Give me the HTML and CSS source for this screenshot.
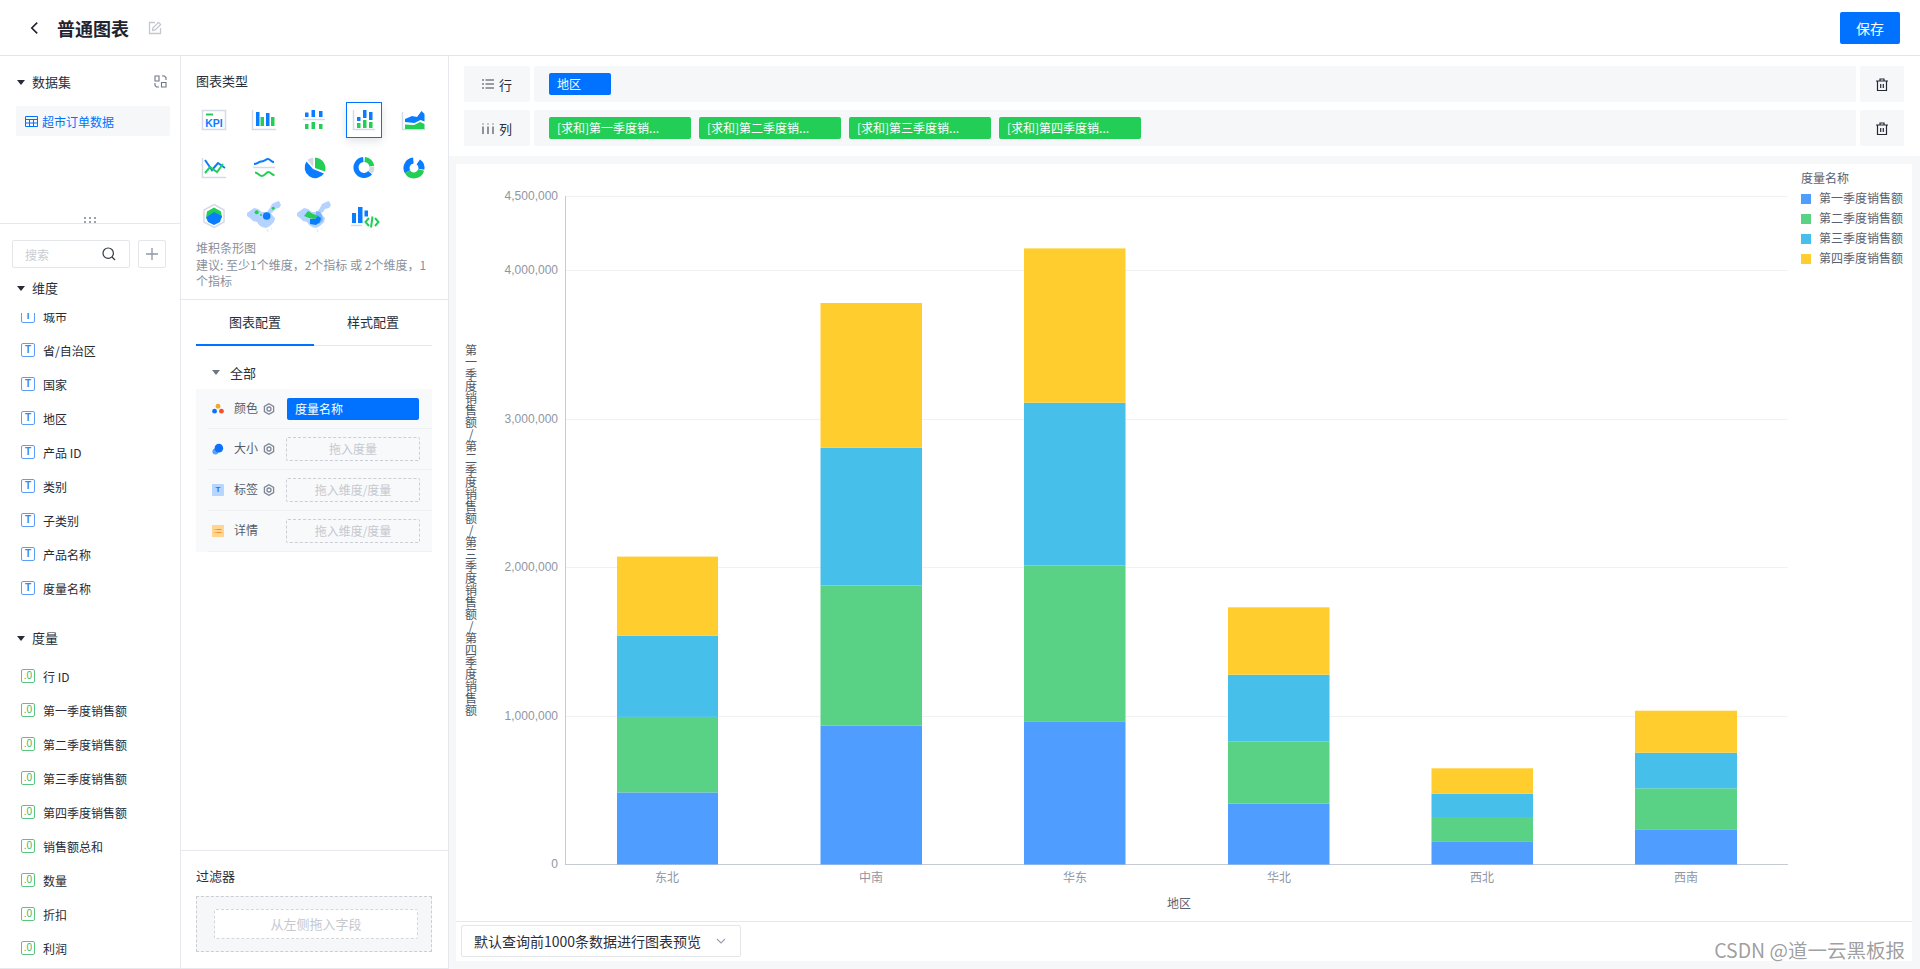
FILE: index.html
```html
<!DOCTYPE html>
<html lang="zh-CN">
<head>
<meta charset="utf-8">
<title>普通图表</title>
<link rel="stylesheet" href="styles.css">
</head>
<body>
<div class="app">
  <header class="topbar">
    <div class="topbar-left">
      <svg class="back" viewBox="0 0 10 14"><path d="M8 1 2 7l6 6"/></svg>
      <h1 class="title">普通图表</h1>
      <svg class="edit" viewBox="0 0 14 14"><path d="M7 1.500H1.500v11h11V7"/><path d="M4.500 9.500 5 6.800 10.500 1.300 12.700 3.500 7.200 9z"/></svg>
    </div>
    <button class="save">保存</button>
  </header>

  <main class="main">
    <aside class="col-fields">
      <section class="dataset">
        <div class="sec-head">
          <span class="caret"></span><span class="sec-name">数据集</span>
          <svg class="swap" viewBox="0 0 13 13"><path d="M5 1H1v5h4V1zM8 1h2.500L12 2.500V5M1 8v2.500L2.500 12H5"/><path d="M7.500 7.500h4.500v4.500H7.500z"/></svg>
        </div>
        <div class="dataset-item">
          <svg class="tbl" viewBox="0 0 13 11"><path d="M.5.500h12v10H.5zM.5 3.500h12M.5 7h12M4.500 3.500v7M8.500 3.500v7"/></svg>
          <span>超市订单数据</span>
        </div>
        <div class="drag-dots">
          <i></i><i></i><i></i><i></i><i></i><i></i>
        </div>
      </section>

      <div class="search-row">
        <div class="search">
          <span>搜索</span>
          <svg viewBox="0 0 14 14"><circle cx="6.200" cy="6.200" r="5.200"/><path d="m10 10 3 3"/></svg>
        </div>
        <div class="plus"><svg viewBox="0 0 12 12"><path d="M6 0v12M0 6h12"/></svg></div>
      </div>
      <div class="sec-head dim-head"><span class="caret"></span><span class="sec-name">维度</span></div>

      <div class="field-scroll">
        <div class="field-inner">
          <div class="field"><span class="ftype t">T</span>城市</div>
          <div class="field"><span class="ftype t">T</span>省/自治区</div>
          <div class="field"><span class="ftype t">T</span>国家</div>
          <div class="field"><span class="ftype t">T</span>地区</div>
          <div class="field"><span class="ftype t">T</span>产品 ID</div>
          <div class="field"><span class="ftype t">T</span>类别</div>
          <div class="field"><span class="ftype t">T</span>子类别</div>
          <div class="field"><span class="ftype t">T</span>产品名称</div>
          <div class="field"><span class="ftype t">T</span>度量名称</div>
          <div class="sec-head measure-head"><span class="caret"></span><span class="sec-name">度量</span></div>
          <div class="field"><span class="ftype n">.0</span>行 ID</div>
          <div class="field"><span class="ftype n">.0</span>第一季度销售额</div>
          <div class="field"><span class="ftype n">.0</span>第二季度销售额</div>
          <div class="field"><span class="ftype n">.0</span>第三季度销售额</div>
          <div class="field"><span class="ftype n">.0</span>第四季度销售额</div>
          <div class="field"><span class="ftype n">.0</span>销售额总和</div>
          <div class="field"><span class="ftype n">.0</span>数量</div>
          <div class="field"><span class="ftype n">.0</span>折扣</div>
          <div class="field"><span class="ftype n">.0</span>利润</div>
        </div>
      </div>
    </aside>

    <aside class="col-config">
      <section class="types">
        <div class="block-title">图表类型</div>
        <div class="type-grid">
          <div class="type-cell"><svg viewBox="0 0 36 36"><path class="ln" d="M6.500 8.500h23v19h-23z"/><path class="g" d="M10 11.500h7v2h-7z"/><text class="kpi" x="18" y="24.500">KPI</text></svg></div>
          <div class="type-cell"><svg viewBox="0 0 36 36"><path class="ln" d="M6.500 8v19.500H30"/><path class="b" d="M10 10h3.500v14H10zM20 11h3.500v13H20z"/><path class="g" d="M14.500 15H18v9h-3.500zM25 15h3.500v9H25z"/></svg></div>
          <div class="type-cell"><svg viewBox="0 0 36 36"><path class="ln" d="M7 17.500h22"/><path class="b" d="M9 10.500h3.500V15H9zM15.500 8H19v7h-3.500zM23 9h3.500v6H23z"/><path class="g" d="M9 22h3.500v5H9zM15.500 20H19v7h-3.500zM23 22h3.500v5H23z"/></svg></div>
          <div class="type-cell active"><svg viewBox="0 0 36 36"><path class="ln" d="M7.500 8v19.500H29"/><path class="b" d="M11 15h3.500v4H11zM17 8h3.500v8H17zM23 10h3.500v8H23z"/><path class="g" d="M11 21h3.500v5H11zM17 18h3.500v8H17zM23 20h3.500v6H23z"/></svg></div>
          <div class="type-cell"><svg viewBox="0 0 36 36"><path class="ln" d="M6.500 10v17.500H29"/><path class="b" d="M9 17l7-3 5 1 4.500-6 3 3v7.500l-4-1.500-6 3-9.500-1z"/><path class="g" d="M9 22.500l9 .5 6-3 4.500 2V27H9z"/></svg></div>

          <div class="type-cell"><svg viewBox="0 0 36 36"><path class="ln" d="M6.500 8v19.500H30"/><path class="st-b" d="M9 10l7 10 6-7 7 5"/><path class="st-g" d="M9 23l5-6 7 5 6-8"/></svg></div>
          <div class="type-cell"><svg viewBox="0 0 36 36"><path class="ln" d="M7 17.500h22"/><path class="st-b" d="M8 14c3 0 4-2 7-2.500 3 0 5-2.500 7-2.500 2.500 0 3 3 6 3"/><path class="st-g" d="M9 22.500c3 0 4 3.500 7 3.500s4-4 6.500-4 3 3 6 3"/></svg></div>
          <div class="type-cell"><svg viewBox="0 0 36 36"><path class="b" d="M10.500 11.500A10.500 10.500 0 1 0 28 23.500L17 19z"/><path class="g" d="M19 7.500A11 11 0 0 1 29 21.500L19 18z"/><path class="l" d="M17.300 7.500A10 10 0 0 0 11.500 10L17.300 17z"/></svg></div>
          <div class="type-cell"><svg viewBox="0 0 36 36"><path class="ar-b" d="M24.100 22.600A8 8 0 1 1 17.300 9.500"/><path class="ar-g" d="M18.700 9.500A8 8 0 0 1 25.900 16.100"/><path class="ar-l" d="M26 16.800A8 8 0 0 1 24.550 22.100"/></svg></div>
          <div class="type-cell"><svg viewBox="0 0 36 36"><path class="sb-b" d="M11.500 21.750A7.500 7.500 0 0 1 17.350 10.500"/><path class="sb-b" d="M22.300 11.850A7.500 7.500 0 0 1 25.400 19.300"/><path class="sb-g" d="M25.200 19.900A7.500 7.500 0 0 1 11.500 21.750"/></svg></div>

          <div class="type-cell"><svg viewBox="0 0 36 36"><path class="ln" d="M18 6.500 28 12v12l-10 5.500L8 24V12z"/><path class="g" d="M18 9.500 25 13.500 26 20 18 22 10 20 11 13.500z"/><path class="b" d="M10 19.500 18 14l8 4-2 6-6 3-6-3z"/></svg></div>
          <div class="type-cell"><svg viewBox="0 0 36 36"><path class="m" d="M1 15l7-5 4 1 4 3 5 0 3-4 2-4 4-2 3-1 2 4-2 3-4 1-2 3-2 1 2 3 2 2-1 4-4 4-4 2-4-1-3-2-2-3-4-1-3-3-3-2z"/><path class="m2" d="M21 31l1 3M25 31h1"/><circle class="g" cx="10.700" cy="14.300" r="2"/><circle class="g" cx="27.300" cy="10.300" r="1.500"/><circle class="g" cx="15" cy="17" r="1"/><circle class="b" cx="20.700" cy="18" r="3.800"/></svg></div>
          <div class="type-cell"><svg viewBox="0 0 36 36"><path class="m" d="M1 15l7-5 4 1 4 3 5 0 3-4 2-4 4-2 3-1 2 4-2 3-4 1-2 3-2 1 2 3 2 2-1 4-4 4-4 2-4-1-3-2-2-3-4-1-3-3-3-2z"/><path class="m2" d="M21 31l1 3M25 31h1"/><path class="md" d="M20 13l4 1 2 3 1 5-4 4-6-1 3-8z"/><path class="g" d="M8 18l4-5 5 3 6 2-5 3-5-1z"/><path class="b" d="M14 21l5 0 3-3 3 2-1 4-4 3-6-1z"/></svg></div>
          <div class="type-cell"><svg viewBox="0 0 36 36"><path class="ln" d="M5 27.500h11"/><path class="b" d="M6 15h4v10H6zM12 9h4.500v16H12zM18.500 12.500H22v6h-3.500z"/><path class="st-g" d="M23 20l-3.500 4 3.500 4M26.500 18.500l-1.500 11M29 20l3.500 4-3.500 4"/></svg></div>
        </div>
        <p class="type-desc">堆积条形图<br>建议: 至少1个维度，2个指标 或 2个维度，1个指标</p>
      </section>

      <div class="tabs">
        <div class="tab on">图表配置</div>
        <div class="tab">样式配置</div>
      </div>

      <div class="group-head"><span class="caret gray"></span><span>全部</span></div>
      <div class="mark-panel">
        <div class="mark-row">
          <svg class="mk" viewBox="0 0 14 14"><circle cx="7" cy="3.800" r="2.800" fill="#f5a623"/><circle cx="3" cy="9.500" r="2.800" fill="#0a72ff"/><circle cx="11" cy="9.500" r="2.800" fill="#f0532d"/></svg>
          <span class="mk-name">颜色</span>
          <svg class="gear" viewBox="0 0 12 12"><path d="M6 .7l4.600 2.650v5.300L6 11.300 1.400 8.650v-5.300z"/><circle cx="6" cy="6" r="2"/></svg>
          <div class="mk-tag">度量名称</div>
        </div>
        <div class="mark-row">
          <svg class="mk" viewBox="0 0 14 14"><circle cx="4" cy="10" r="3.500" fill="#5c9dff"/><circle cx="8" cy="6" r="5" fill="#0a72ff"/></svg>
          <span class="mk-name">大小</span>
          <svg class="gear" viewBox="0 0 12 12"><path d="M6 .7l4.600 2.650v5.300L6 11.300 1.400 8.650v-5.300z"/><circle cx="6" cy="6" r="2"/></svg>
          <div class="mk-drop">拖入度量</div>
        </div>
        <div class="mark-row">
          <span class="mk-t">T</span>
          <span class="mk-name">标签</span>
          <svg class="gear" viewBox="0 0 12 12"><path d="M6 .7l4.600 2.650v5.300L6 11.300 1.400 8.650v-5.300z"/><circle cx="6" cy="6" r="2"/></svg>
          <div class="mk-drop">拖入维度/度量</div>
        </div>
        <div class="mark-row">
          <svg class="mk" viewBox="0 0 12 12"><path fill="#ffd591" d="M0 0h12v12H0z"/><path fill="#f5921e" d="M2.500 4h1v1h-1zM4.500 4h5v1h-5zM2.500 7h1v1h-1zM4.500 7h5v1h-5z"/></svg>
          <span class="mk-name">详情</span>
          <span class="gear-space"></span>
          <div class="mk-drop">拖入维度/度量</div>
        </div>
      </div>

      <section class="filter">
        <div class="block-title">过滤器</div>
        <div class="filter-box"><div class="filter-drop">从左侧拖入字段</div></div>
      </section>
    </aside>

    <section class="col-chart">
      <div class="shelves">
        <div class="shelf">
          <div class="shelf-label">
            <svg viewBox="0 0 12 10"><path d="M0 1h2M3.500 1H12M0 5h2M3.500 5H12M0 9h2M3.500 9H12"/></svg>
            <span>行</span>
          </div>
          <div class="shelf-body"><span class="pill dim">地区</span></div>
          <div class="shelf-del"><svg viewBox="0 0 12 13"><path d="M0 3h12M4 3V1h4v2M1.500 3v9.500h9V3M4.700 6v4M7.300 6v4"/></svg></div>
        </div>
        <div class="shelf">
          <div class="shelf-label">
            <svg viewBox="0 0 12 12"><path d="M1 1.500v1M1 4.500V12M6 1.500v1M6 4.500V12M11 1.500v1M11 4.500V12"/></svg>
            <span>列</span>
          </div>
          <div class="shelf-body">
            <span class="pill mea">[求和]第一季度销...</span>
            <span class="pill mea">[求和]第二季度销...</span>
            <span class="pill mea">[求和]第三季度销...</span>
            <span class="pill mea">[求和]第四季度销...</span>
          </div>
          <div class="shelf-del"><svg viewBox="0 0 12 13"><path d="M0 3h12M4 3V1h4v2M1.500 3v9.500h9V3M4.700 6v4M7.300 6v4"/></svg></div>
        </div>
      </div>

      <div class="chart-wrap">
        <div class="chart-card">
          <svg class="chart" viewBox="456 164 1456 757">
            <path class="grid" d="M565 196.500H1788M565 270.500H1788M565 419.500H1788M565 567.500H1788M565 716.500H1788"/>
            <path class="axis" d="M565.500 196V865M565 864.500H1788"/>

            <text class="ylab" x="558" y="200">4,500,000</text>
            <text class="ylab" x="558" y="274">4,000,000</text>
            <text class="ylab" x="558" y="423">3,000,000</text>
            <text class="ylab" x="558" y="571">2,000,000</text>
            <text class="ylab" x="558" y="720">1,000,000</text>
            <text class="ylab" x="558" y="868">0</text>
            <text class="ytitle" x="471" y="344">第一季度销售额/第二季度销售额/第三季度销售额/第四季度销售额</text>

            <rect class="s1" x="617" y="792.400" width="101" height="72"/>
            <rect class="s2" x="617" y="716.900" width="101" height="75.500"/>
            <rect class="s3" x="617" y="635.700" width="101" height="81.200"/>
            <rect class="s4" x="617" y="556.600" width="101" height="79.100"/>

            <rect class="s1" x="820.500" y="725.700" width="101.500" height="138.800"/>
            <rect class="s2" x="820.500" y="585.500" width="101.500" height="140.200"/>
            <rect class="s3" x="820.500" y="447.700" width="101.500" height="137.800"/>
            <rect class="s4" x="820.500" y="303" width="101.500" height="144.700"/>

            <rect class="s1" x="1024" y="721.300" width="101.500" height="143.200"/>
            <rect class="s2" x="1024" y="565.400" width="101.500" height="155.900"/>
            <rect class="s3" x="1024" y="402.700" width="101.500" height="162.700"/>
            <rect class="s4" x="1024" y="248.400" width="101.500" height="154.300"/>

            <rect class="s1" x="1228" y="803.700" width="101.500" height="60.800"/>
            <rect class="s2" x="1228" y="741.300" width="101.500" height="62.400"/>
            <rect class="s3" x="1228" y="674.700" width="101.500" height="66.600"/>
            <rect class="s4" x="1228" y="607.300" width="101.500" height="67.400"/>

            <rect class="s1" x="1431.500" y="841.300" width="101.500" height="23.200"/>
            <rect class="s2" x="1431.500" y="817" width="101.500" height="24.300"/>
            <rect class="s3" x="1431.500" y="793.700" width="101.500" height="23.300"/>
            <rect class="s4" x="1431.500" y="768.300" width="101.500" height="25.400"/>

            <rect class="s1" x="1635" y="829.300" width="102" height="35.200"/>
            <rect class="s2" x="1635" y="788.300" width="102" height="41"/>
            <rect class="s3" x="1635" y="752.700" width="102" height="35.600"/>
            <rect class="s4" x="1635" y="710.700" width="102" height="42"/>

            <text class="xlab" x="667" y="882">东北</text>
            <text class="xlab" x="871" y="882">中南</text>
            <text class="xlab" x="1075" y="882">华东</text>
            <text class="xlab" x="1279" y="882">华北</text>
            <text class="xlab" x="1482" y="882">西北</text>
            <text class="xlab" x="1686" y="882">西南</text>
            <text class="xtitle" x="1179" y="908">地区</text>

            <text class="lgd" x="1801" y="183">度量名称</text>
            <rect class="s1" x="1801" y="194" width="10" height="10"/><text class="lgd" x="1819" y="203">第一季度销售额</text>
            <rect class="s2" x="1801" y="214" width="10" height="10"/><text class="lgd" x="1819" y="223">第二季度销售额</text>
            <rect class="s3" x="1801" y="234" width="10" height="10"/><text class="lgd" x="1819" y="243">第三季度销售额</text>
            <rect class="s4" x="1801" y="254" width="10" height="10"/><text class="lgd" x="1819" y="263">第四季度销售额</text>
          </svg>
          <footer class="chart-foot">
            <div class="limit-select">
              <span>默认查询前1000条数据进行图表预览</span>
              <svg viewBox="0 0 10 6"><path d="M1 1l4 4 4-4"/></svg>
            </div>
          </footer>
        </div>
      </div>
    </section>
  </main>
  <div class="watermark">CSDN @道一云黑板报</div>
</div>
</body>
</html>
```

FILE: styles.css
```css
* { box-sizing: border-box; }
html, body { margin: 0; height: 100%; }
body {
  font-family: "Noto Sans CJK SC", "Noto Sans", "Liberation Sans", sans-serif;
  font-size: 12px;
  color: #2a2f3a;
  background: #fff;
  overflow: hidden;
}
.app { position: relative; height: 969px; display: flex; flex-direction: column; }

/* top bar */
.topbar {
  height: 56px; flex: none;
  display: flex; align-items: center; justify-content: space-between;
  padding: 0 20px 0 30px;
  border-bottom: 1px solid #e4e5e7;
}
.topbar-left { display: flex; align-items: center; }
.back { width: 9px; height: 14px; fill: none; stroke: #1f232b; stroke-width: 1.800; }
.title { margin: 0 0 0 18px; font-size: 18px; line-height: 24px; font-weight: 700; color: #1f2430; }
.edit { width: 14px; height: 14px; margin-left: 19px; fill: none; stroke: #c4c8d0; stroke-width: 1.300; }
.save {
  width: 60px; height: 32px; border: 0; border-radius: 2px;
  background: #0072ff; color: #fff;
  font: 14px "Noto Sans CJK SC", sans-serif;
  margin-top: 1px;
}

.main { flex: 1; display: flex; min-height: 0; }

/* left column */
.col-fields {
  width: 181px; flex: none;
  display: flex; flex-direction: column;
  border-right: 1px solid #e6e8ee;
  border-bottom: 1px solid #e6e8ee;
}
.dataset { position: relative; height: 168px; flex: none; padding-top: 16px; border-bottom: 1px solid #e6e8ee; }
.sec-head { display: flex; align-items: center; height: 20px; padding-left: 17px; position: relative; }
.caret {
  width: 0; height: 0; flex: none;
  border-left: 4px solid transparent; border-right: 4px solid transparent;
  border-top: 5px solid #262b36;
}
.caret.gray { border-top-color: #6f7682; }
.sec-name { margin-left: 7px; font-size: 13px; line-height: 20px; color: #2a2f3a; }
.swap {
  position: absolute; left: 154px; top: 3px;
  width: 13px; height: 13px; fill: none; stroke: #6f7888; stroke-width: 1.100;
}
.dataset-item {
  margin: 14px 10px 0 16px; height: 30px; border-radius: 2px;
  background: #f6f7f9; color: #0072ff;
  display: flex; align-items: center; padding-left: 9px;
}
.tbl { width: 13px; height: 11px; margin-right: 4px; fill: none; stroke: #0072ff; stroke-width: 1; }
.drag-dots {
  position: absolute; left: 84px; top: 161px; width: 12px;
  display: grid; grid-template-columns: repeat(3, 2px); gap: 2px 3px;
}
.drag-dots i { width: 2px; height: 2px; background: #9aa1ad; }

.search-row { display: flex; gap: 8px; padding: 16px 0 0 12px; flex: none; }
.search {
  width: 118px; height: 28px; border: 1px solid #e4e6ea; border-radius: 2px;
  display: flex; align-items: center; justify-content: space-between;
  padding: 0 13px 0 12px; color: #c9ccd2;
}
.search svg { width: 14px; height: 14px; fill: none; stroke: #333a46; stroke-width: 1.200; }
.plus {
  width: 28px; height: 28px; border: 1px solid #e4e6ea; border-radius: 2px;
  display: flex; align-items: center; justify-content: center;
}
.plus svg { width: 12px; height: 12px; fill: none; stroke: #8e96a4; stroke-width: 1.300; }
.dim-head { margin-top: 10px; margin-bottom: 1px; flex: none; }

.field-scroll { margin-top: 14px; flex: 1; min-height: 0; overflow: hidden; }
.field-inner { margin-top: -14px; }
.field {
  height: 34px; display: flex; align-items: center;
  padding-left: 21px; font-size: 12px; color: #262b36;
}
.ftype {
  width: 14px; height: 14px; flex: none; margin-right: 8px;
  border-radius: 2px; border: 1px solid;
  display: flex; align-items: center; justify-content: center;
  font: 10px/12px "Liberation Sans", sans-serif;
}
.ftype.t { border-color: #5b9df8; color: #3f86ee; font-weight: 700; }
.ftype.n { border-color: #5bc57f; color: #3db768; }
.measure-head { margin: 16px 0 4px; height: 34px; }

/* middle column */
.col-config {
  width: 268px; flex: none; position: relative;
  display: flex; flex-direction: column;
  border-right: 1px solid #e6e8ee;
  border-bottom: 1px solid #e6e8ee;
}
.types { height: 244px; flex: none; padding: 15px 12px 0 15px; border-bottom: 1px solid #e6e8ee; }
.block-title { font-size: 13px; line-height: 20px; color: #2a2f3a; }
.type-grid {
  margin-top: 11px;
  display: grid; grid-template-columns: repeat(5, 36px); grid-auto-rows: 36px; gap: 12px 14px;
}
.type-cell { width: 36px; height: 36px; }
.type-cell svg { display: block; width: 36px; height: 36px; overflow: visible; }
.type-cell.active { border: 1px solid #0072ff; box-shadow: 0 3px 8px rgba(30, 50, 90, .14); }
.type-cell.active svg { margin: -1px; }
.ln { fill: none; stroke: #d5dbe6; stroke-width: 1.500; }
.b { fill: #0a7cff; }
.g { fill: #22ce55; }
.l { fill: #d3d8e2; }
.m { fill: #b4d3ff; }
.md { fill: #7db2ff; }
.m2 { fill: none; stroke: #e6edf8; stroke-width: 1.500; }
.st-b { fill: none; stroke: #0a7cff; stroke-width: 2; }
.st-g { fill: none; stroke: #22ce55; stroke-width: 2; }
.ar-b, .ar-g, .ar-l { fill: none; stroke-width: 5; }
.ar-b { stroke: #0a7cff; }
.ar-g { stroke: #22ce55; }
.ar-l { stroke: #d3d8e2; }
.sb-b, .sb-g { fill: none; stroke-width: 6; }
.sb-b { stroke: #0a7cff; }
.sb-g { stroke: #22ce55; }
.kpi { font: 700 10.500px "Liberation Sans", sans-serif; fill: #0a7cff; text-anchor: middle; }
.type-desc { margin: 6px 0 0; font-size: 12px; line-height: 16.500px; color: #8a909c; }

.tabs { display: flex; height: 46px; margin: 0 16px 0 15px; flex: none; border-bottom: 1px solid #e6e8ee; }
.tab { width: 118px; height: 46px; font-size: 13px; line-height: 44px; text-align: center; color: #2a2f3a; }
.tab.on { border-bottom: 2px solid #0072ff; }

.group-head {
  height: 20px; margin-top: 16px; margin-bottom: 1px; padding-left: 31px; flex: none;
  display: flex; align-items: center; font-size: 13px; gap: 10px;
}
.mark-panel {
  margin: 6px 16px 0 15px; padding-left: 12px; background: #f8f9fb; flex: none;
}
.mark-row {
  height: 41px; display: flex; align-items: center;
  padding-left: 4px; border-bottom: 1px solid #f0f1f4;
}
.mark-row:first-child { height: 40px; }
.mk { width: 12px; height: 12px; flex: none; margin-right: 10px; }
.mk-t {
  width: 12px; height: 12px; flex: none; margin-right: 10px;
  background: #b8d5ff; color: #1677ff; border-radius: 1px;
  font: 700 8px/12px "Liberation Sans", sans-serif; text-align: center;
}
.mk-name { width: 24px; flex: none; color: #555c69; font-size: 12px; line-height: 16px; margin-bottom: 2px; }
.gear { width: 12px; height: 12px; flex: none; margin-left: 5px; fill: none; stroke: #7f8797; stroke-width: 1.300; }
.gear-space { width: 12px; margin-left: 5px; flex: none; }
.mk-tag {
  width: 132px; height: 22px; margin-left: 12px; padding-left: 8px;
  border-radius: 2px; background: #0072ff; color: #fff; line-height: 21px;
}
.mk-drop {
  width: 134px; height: 24px; margin-left: 11px;
  border: 1px dashed #ccced4; border-radius: 2px;
  color: #c5c8ce; text-align: center; line-height: 22px;
}
.filter {
  position: absolute; left: 0; right: 0; bottom: 0; height: 118px;
  padding: 15px 15px 0; border-top: 1px solid #e6e8ee;
}
.filter-box {
  width: 236px; height: 56px; margin-top: 10px; padding: 12px 0 0 17px;
  background: #f6f7f9; border: 1px dashed #ccced4;
}
.filter-drop {
  width: 204px; height: 30px; background: #fff;
  border: 1px dashed #d4d6db; border-radius: 2px;
  text-align: center; font-size: 13px; line-height: 28px; color: #c5c8ce;
}

/* right column */
.col-chart { flex: 1; min-width: 0; display: flex; flex-direction: column; background: #f6f7f9; }
.shelves {
  height: 100px; flex: none; background: #fff;
  padding: 10px 16px 0 15px;
  display: flex; flex-direction: column; gap: 8px;
}
.shelf { display: flex; gap: 4px; height: 36px; }
.shelf-label {
  width: 66px; border-radius: 2px; background: #f6f7f9;
  display: flex; align-items: center; justify-content: center; gap: 5px;
  font-size: 13px; color: #2a2f3a;
}
.shelf-label svg { width: 12px; height: 12px; fill: none; stroke: #3c424e; stroke-width: 1.100; }
.shelf-body {
  flex: 1; border-radius: 2px; background: #f6f7f9;
  display: flex; align-items: center; gap: 8px; padding-left: 15px;
}
.shelf-del {
  width: 44px; border-radius: 2px; background: #f6f7f9;
  display: flex; align-items: center; justify-content: center;
}
.shelf-del svg { width: 12px; height: 13px; fill: none; stroke: #232833; stroke-width: 1.200; }
.pill {
  height: 22px; border-radius: 2px; color: #fff;
  padding-left: 8px; line-height: 21px; font-size: 12px;
}
.pill.dim { width: 62px; background: #0072ff; }
.pill.mea { width: 142px; background: #22ce55; }

.chart-wrap { flex: 1; min-height: 0; padding: 8px 8px 8px 7px; display: flex; }
.chart-card { flex: 1; background: #fff; display: flex; flex-direction: column; }
.chart { display: block; width: 1456px; height: 757px; flex: none; }
.grid { fill: none; stroke: #f0f1f3; stroke-width: 1; }
.axis { fill: none; stroke: #c6cad2; stroke-width: 1; }
.ylab, .xlab, .xtitle, .lgd, .ytitle { font: 12px "Noto Sans CJK SC", "Liberation Sans", sans-serif; }
.ylab { font-family: "Liberation Sans", sans-serif; fill: #8f96a3; text-anchor: end; }
.xlab { fill: #8f96a3; text-anchor: middle; }
.xtitle { fill: #5a6270; text-anchor: middle; }
.lgd { fill: #5a6270; }
.ytitle { fill: #4f5763; writing-mode: vertical-rl; text-orientation: upright; }
.s1 { fill: #4e9dff; }
.s2 { fill: #59d286; }
.s3 { fill: #46bfeb; }
.s4 { fill: #ffce2e; }

.chart-foot { flex: 1; border-top: 1px solid #e6e8ee; padding: 3px 0 0 5px; }
.limit-select {
  width: 280px; height: 32px; border: 1px solid #e4e6ea; border-radius: 2px;
  display: flex; align-items: center; justify-content: space-between;
  padding: 0 14px 0 12px; font-size: 14px; color: #2a2f3a;
}
.limit-select svg { width: 10px; height: 6px; fill: none; stroke: #9aa1ad; stroke-width: 1.100; }

.watermark {
  position: absolute; right: 15px; top: 936px;
  font-family: "Noto Sans CJK SC", sans-serif; font-size: 19.500px; line-height: 28px;
  color: rgba(95, 95, 95, .62);
}
```
